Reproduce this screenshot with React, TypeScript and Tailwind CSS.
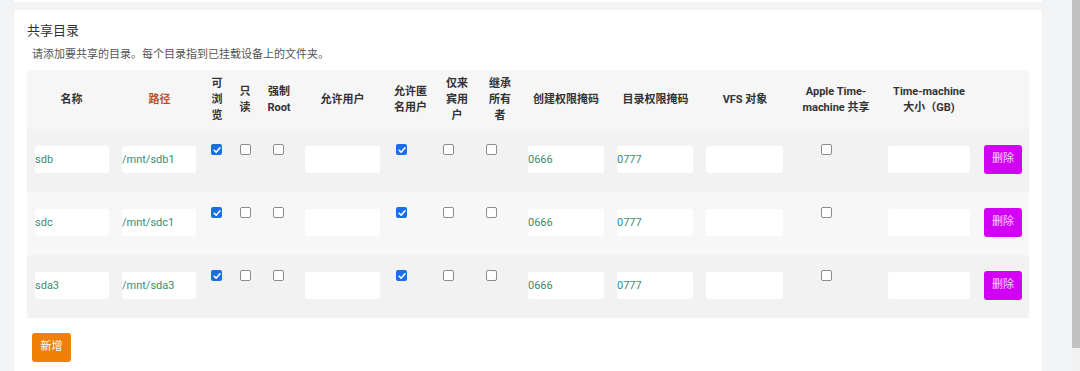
import React from "react";

const FONT = { fontFamily: 'Roboto, "Noto Sans CJK SC", sans-serif' };

function Cb({ checked }: { checked: boolean }) {
  if (checked) {
    return (
      <span className="flex w-[11px] h-[11px] rounded-[2px] bg-[#1b6fe6] items-center justify-center">
        <svg viewBox="0 0 12 12" className="w-[10px] h-[10px]">
          <path d="M2.6 6.3 L5 8.6 L9.6 3.4" stroke="white" strokeWidth="1.9" fill="none" strokeLinecap="round" strokeLinejoin="round" />
        </svg>
      </span>
    );
  }
  return <span className="block w-[11px] h-[11px] rounded-[2px] border border-[#8c8c8c] bg-white" />;
}

function Field({ value, w }: { value: string; w: string }) {
  return (
    <input
      readOnly
      value={value}
      style={FONT}
      className={`${w} h-[27px] bg-white rounded-[3px] px-0 text-[11px] text-[#3d8a6e] outline-none`}
    />
  );
}

const rows = [
  { name: "sdb", path: "/mnt/sdb1", bg: "bg-[#f2f2f2]" },
  { name: "sdc", path: "/mnt/sdc1", bg: "bg-[#f7f7f7]" },
  { name: "sda3", path: "/mnt/sda3", bg: "bg-[#f2f2f2]" },
];

export default function App() {
  return (
    <div className="w-[1080px] h-[371px] overflow-hidden bg-[#f2f3f5] flex" style={FONT}>
      <div className="w-[1072px] flex flex-col pl-[14px] pr-[30px]">
        <div className="h-[2px] bg-white shrink-0" />
        <div className="mt-[8px] flex-1 bg-white rounded-t-[4px] px-[13px] pt-[12px]">
          <div className="text-[13px] leading-[18px] text-[#333]">共享目录</div>
          <div className="mt-[7px] pl-[5px] text-[11px] leading-[16px] text-[#555]">
            请添加要共享的目录。每个目录指到已挂载设备上的文件夹。
          </div>
          <table className="mt-[7px] table-fixed border-collapse w-[1002px]">
            <colgroup>
              <col className="w-[89px]" />
              <col className="w-[87px]" />
              <col className="w-[28px]" />
              <col className="w-[28px]" />
              <col className="w-[40px]" />
              <col className="w-[87px]" />
              <col className="w-[49px]" />
              <col className="w-[44px]" />
              <col className="w-[42px]" />
              <col className="w-[90px]" />
              <col className="w-[89px]" />
              <col className="w-[90px]" />
              <col className="w-[92px]" />
              <col className="w-[94px]" />
              <col className="w-[53px]" />
            </colgroup>
            <thead>
              <tr className="h-[59px] bg-[#f6f6f6] text-[11px] leading-[16px] font-bold text-[#333]">
                <th className="text-center align-middle">名称</th>
                <th className="text-center align-middle text-[#b9531f]">路径</th>
                <th className="text-center align-middle">可<br />浏<br />览</th>
                <th className="text-center align-middle">只<br />读</th>
                <th className="text-center align-middle">强制<br />Root</th>
                <th className="text-center align-middle">允许用户</th>
                <th className="text-center align-middle">允许匿<br />名用户</th>
                <th className="text-center align-middle">仅来<br />宾用<br />户</th>
                <th className="text-center align-middle">继承<br />所有<br />者</th>
                <th className="text-center align-middle">创建权限掩码</th>
                <th className="text-center align-middle">目录权限掩码</th>
                <th className="text-center align-middle">VFS 对象</th>
                <th className="text-center align-middle">Apple Time-<br />machine 共享</th>
                <th className="text-center align-middle">Time-machine<br />大小（GB)</th>
                <th />
              </tr>
            </thead>
            <tbody>
              {rows.map((r) => (
                <tr key={r.name} className={`h-[63px] ${r.bg}`}>
                  <td className="align-top pt-[17px] pl-[8px]"><Field value={r.name} w="w-[74px]" /></td>
                  <td className="align-top pt-[17px] pl-[6px]"><Field value={r.path} w="w-[74px]" /></td>
                  <td className="align-top pt-[15px] pl-[8px]"><Cb checked /></td>
                  <td className="align-top pt-[15px] pl-[9px]"><Cb checked={false} /></td>
                  <td className="align-top pt-[15px] pl-[14px]"><Cb checked={false} /></td>
                  <td className="align-top pt-[17px] pl-[6px]"><Field value="" w="w-[75px]" /></td>
                  <td className="align-top pt-[15px] pl-[10px]"><Cb checked /></td>
                  <td className="align-top pt-[15px] pl-[8px]"><Cb checked={false} /></td>
                  <td className="align-top pt-[15px] pl-[7px]"><Cb checked={false} /></td>
                  <td className="align-top pt-[17px] pl-[7px]"><Field value="0666" w="w-[76px]" /></td>
                  <td className="align-top pt-[17px] pl-[6px]"><Field value="0777" w="w-[76px]" /></td>
                  <td className="align-top pt-[17px] pl-[6px]"><Field value="" w="w-[77px]" /></td>
                  <td className="align-top pt-[15px] pl-[31px]"><Cb checked={false} /></td>
                  <td className="align-top pt-[17px] pl-[6px]"><Field value="" w="w-[82px]" /></td>
                  <td className="align-top pt-[16px] pl-[8px]">
                    <button className="w-[38px] h-[29px] rounded-[3px] bg-[#d200f5] text-[11px] text-[#fbd8ff]">删除</button>
                  </td>
                </tr>
              ))}
            </tbody>
          </table>
          <div className="mt-[15px] pl-[5px]">
            <button className="w-[39px] h-[29px] rounded-[3px] bg-[#ef8106] text-[11px] text-white">新增</button>
          </div>
        </div>
      </div>
      <div className="w-[8px] flex flex-col">
        <div className="h-[348px] bg-[#c1c1c1]" />
        <div className="flex-1 bg-[#f1f1f1]" />
      </div>
    </div>
  );
}
